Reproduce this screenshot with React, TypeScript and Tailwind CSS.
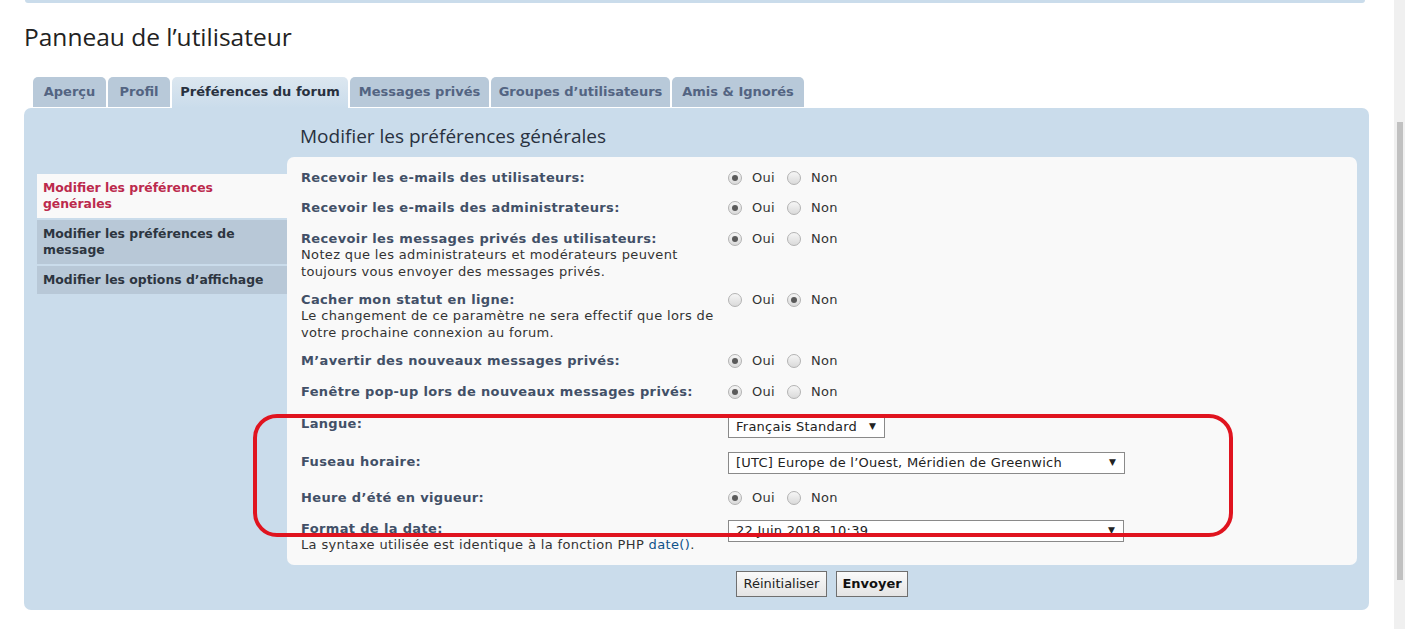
const tabs = [
  { label: 'Aperçu', w: 'w-[73px]' },
  { label: 'Profil', w: 'w-[62px]' },
  { label: 'Préférences du forum', w: 'w-[176px]', active: true },
  { label: 'Messages privés', w: 'w-[139px]' },
  { label: 'Groupes d’utilisateurs', w: 'w-[179px]' },
  { label: 'Amis & Ignorés', w: 'w-[132px]' },
];

function Radio({ on }: { on?: boolean }) {
  return (
    <span className="flex h-[14px] w-[14px] items-center justify-center rounded-full border border-[#b3b3b3] bg-linear-to-b from-[#f6f6f6] to-[#dadada]">
      {on && <span className="h-[6px] w-[6px] rounded-full bg-[#5a5a5a]" />}
    </span>
  );
}

function YesNo({ yes }: { yes: boolean }) {
  return (
    <div className="flex h-[17px] items-center text-[#333]">
      <Radio on={yes} />
      <span className="ml-[10px] tracking-[0.3px]">Oui</span>
      <span className="ml-[12px]">
        <Radio on={!yes} />
      </span>
      <span className="ml-[10px] tracking-[0.3px]">Non</span>
    </div>
  );
}

function Select({ value, w }: { value: string; w: string }) {
  return (
    <div className={`flex h-[22px] items-center justify-between border border-[#8a8a8a] bg-white pl-[7px] pr-[8px] text-[#222] ${w}`}>
      <span className="whitespace-nowrap tracking-[0.25px]">{value}</span>
      <span className="text-[9px]">▼</span>
    </div>
  );
}

type Row = {
  label: string;
  note?: React.ReactNode;
  h: string;
  value: React.ReactNode;
};

const rows: Row[] = [
  { label: 'Recevoir les e-mails des utilisateurs:', h: 'h-[30px]', value: <YesNo yes /> },
  { label: 'Recevoir les e-mails des administrateurs:', h: 'h-[31px]', value: <YesNo yes /> },
  {
    label: 'Recevoir les messages privés des utilisateurs:',
    note: (
      <>
        Notez que les administrateurs et modérateurs peuvent
        <br />
        toujours vous envoyer des messages privés.
      </>
    ),
    h: 'h-[61px]',
    value: <YesNo yes />,
  },
  {
    label: 'Cacher mon statut en ligne:',
    note: (
      <>
        Le changement de ce paramètre ne sera effectif que lors de
        <br />
        votre prochaine connexion au forum.
      </>
    ),
    h: 'h-[61px]',
    value: <YesNo yes={false} />,
  },
  { label: 'M’avertir des nouveaux messages privés:', h: 'h-[31px]', value: <YesNo yes /> },
  { label: 'Fenêtre pop-up lors de nouveaux messages privés:', h: 'h-[32px]', value: <YesNo yes /> },
  {
    label: 'Langue:',
    h: 'h-[38px]',
    value: (
      <div className="mt-[1px]">
        <Select value="Français Standard" w="w-[157px]" />
      </div>
    ),
  },
  {
    label: 'Fuseau horaire:',
    h: 'h-[36px]',
    value: (
      <div className="-mt-[1px]">
        <Select value="[UTC] Europe de l’Ouest, Méridien de Greenwich" w="w-[397px]" />
      </div>
    ),
  },
  { label: 'Heure d’été en vigueur:', h: 'h-[31px]', value: <YesNo yes /> },
  {
    label: 'Format de la date:',
    note: (
      <>
        La syntaxe utilisée est identique à la fonction PHP <span className="text-[#105289]">date()</span>.
      </>
    ),
    h: 'h-[45px]',
    value: <Select value="22 Juin 2018, 10:39" w="w-[396px]" />,
  },
];

export default function App() {
  return (
    <div className="flex h-[629px] w-[1405px] overflow-hidden bg-white font-['DejaVu_Sans',sans-serif] text-[13px]">
      <div className="relative w-[1394px] pl-[24px]">
        {/* tail of the header panel above */}
        <div className="ml-[1px] h-[3px] w-[1340px] rounded-b-[4px] bg-[#cadceb]" />

        <h1 className="mt-[20px] h-[28px] font-['Open_Sans',sans-serif] text-[24.5px] leading-[28px] text-[#222]">
          Panneau de l’utilisateur
        </h1>

        <div className="mt-[26px] flex h-[31px] items-start gap-[2px] pl-[9px]">
          {tabs.map((t) =>
            t.active ? (
              <div
                key={t.label}
                className={`flex h-[31px] items-center justify-center rounded-t-[5px] bg-linear-to-b from-[#dce7f0] to-[#cadceb] pb-[2px] font-bold text-[#28313f] ${t.w}`}
              >
                {t.label}
              </div>
            ) : (
              <div
                key={t.label}
                className={`flex h-[30px] items-center justify-center rounded-t-[5px] bg-[#b8c9d9] font-bold text-[#536482] ${t.w}`}
              >
                {t.label}
              </div>
            )
          )}
        </div>

        <div className="flex h-[502px] w-[1345px] rounded-[7px] bg-[#cadceb]">
          {/* side navigation */}
          <div className="w-[263px] pl-[13px] pt-[66px]">
            <div className="flex flex-col gap-[2px] text-[12.4px] font-bold leading-[16px]">
              <div className="bg-[#f9f9f9] px-[6px] py-[6px] text-[#bc2a4d]">
                Modifier les préférences
                <br />
                générales
              </div>
              <div className="bg-[#b8c8d7] px-[6px] py-[6px] text-[#2d3540]">
                Modifier les préférences de
                <br />
                message
              </div>
              <div className="bg-[#b8c8d7] px-[6px] py-[6px] text-[#2d3540]">Modifier les options d’affichage</div>
            </div>
          </div>

          <div className="w-[1070px]">
            <h2 className="mt-[16px] h-[24px] pl-[13px] font-['Open_Sans',sans-serif] text-[19px] leading-[24px] text-[#28313f]">
              Modifier les préférences générales
            </h2>

            <div className="mt-[9px] h-[408px] rounded-[7px] bg-[#f9f9f9] px-[14px] pt-[7px]">
              {rows.map((r) => (
                <div key={r.label} className={`flex ${r.h}`}>
                  <div className="w-[427px] pt-[5px] tracking-[0.35px]">
                    <div className="font-bold leading-[17px] text-[#425067]">{r.label}</div>
                    {r.note && <div className="leading-[16.5px] text-[#333]">{r.note}</div>}
                  </div>
                  <div className="flex-1 pt-[5px]">{r.value}</div>
                </div>
              ))}
            </div>

            <div className="mt-[6px] flex justify-center gap-[9px]">
              <button className="h-[26px] w-[91px] border border-[#6f6f6f] bg-linear-to-b from-[#fafafa] to-[#e4e4e4] text-[#222]">
                Réinitialiser
              </button>
              <button className="h-[26px] w-[72px] border border-[#6f6f6f] bg-linear-to-b from-[#fafafa] to-[#e4e4e4] font-bold text-[#111]">
                Envoyer
              </button>
            </div>
          </div>
        </div>

        {/* red highlight drawn over the regional settings */}
        <div className="pointer-events-none absolute left-[253px] top-[414px] h-[123px] w-[980px] rounded-[24px] border-[4px] border-[#e0141f]" />
      </div>

      {/* scrollbar */}
      <div className="w-[11px] bg-[#f0f0f0] pl-[3px] pt-[122px]">
        <div className="h-[458px] w-[6px] bg-[#c1c1c1]" />
      </div>
    </div>
  );
}
